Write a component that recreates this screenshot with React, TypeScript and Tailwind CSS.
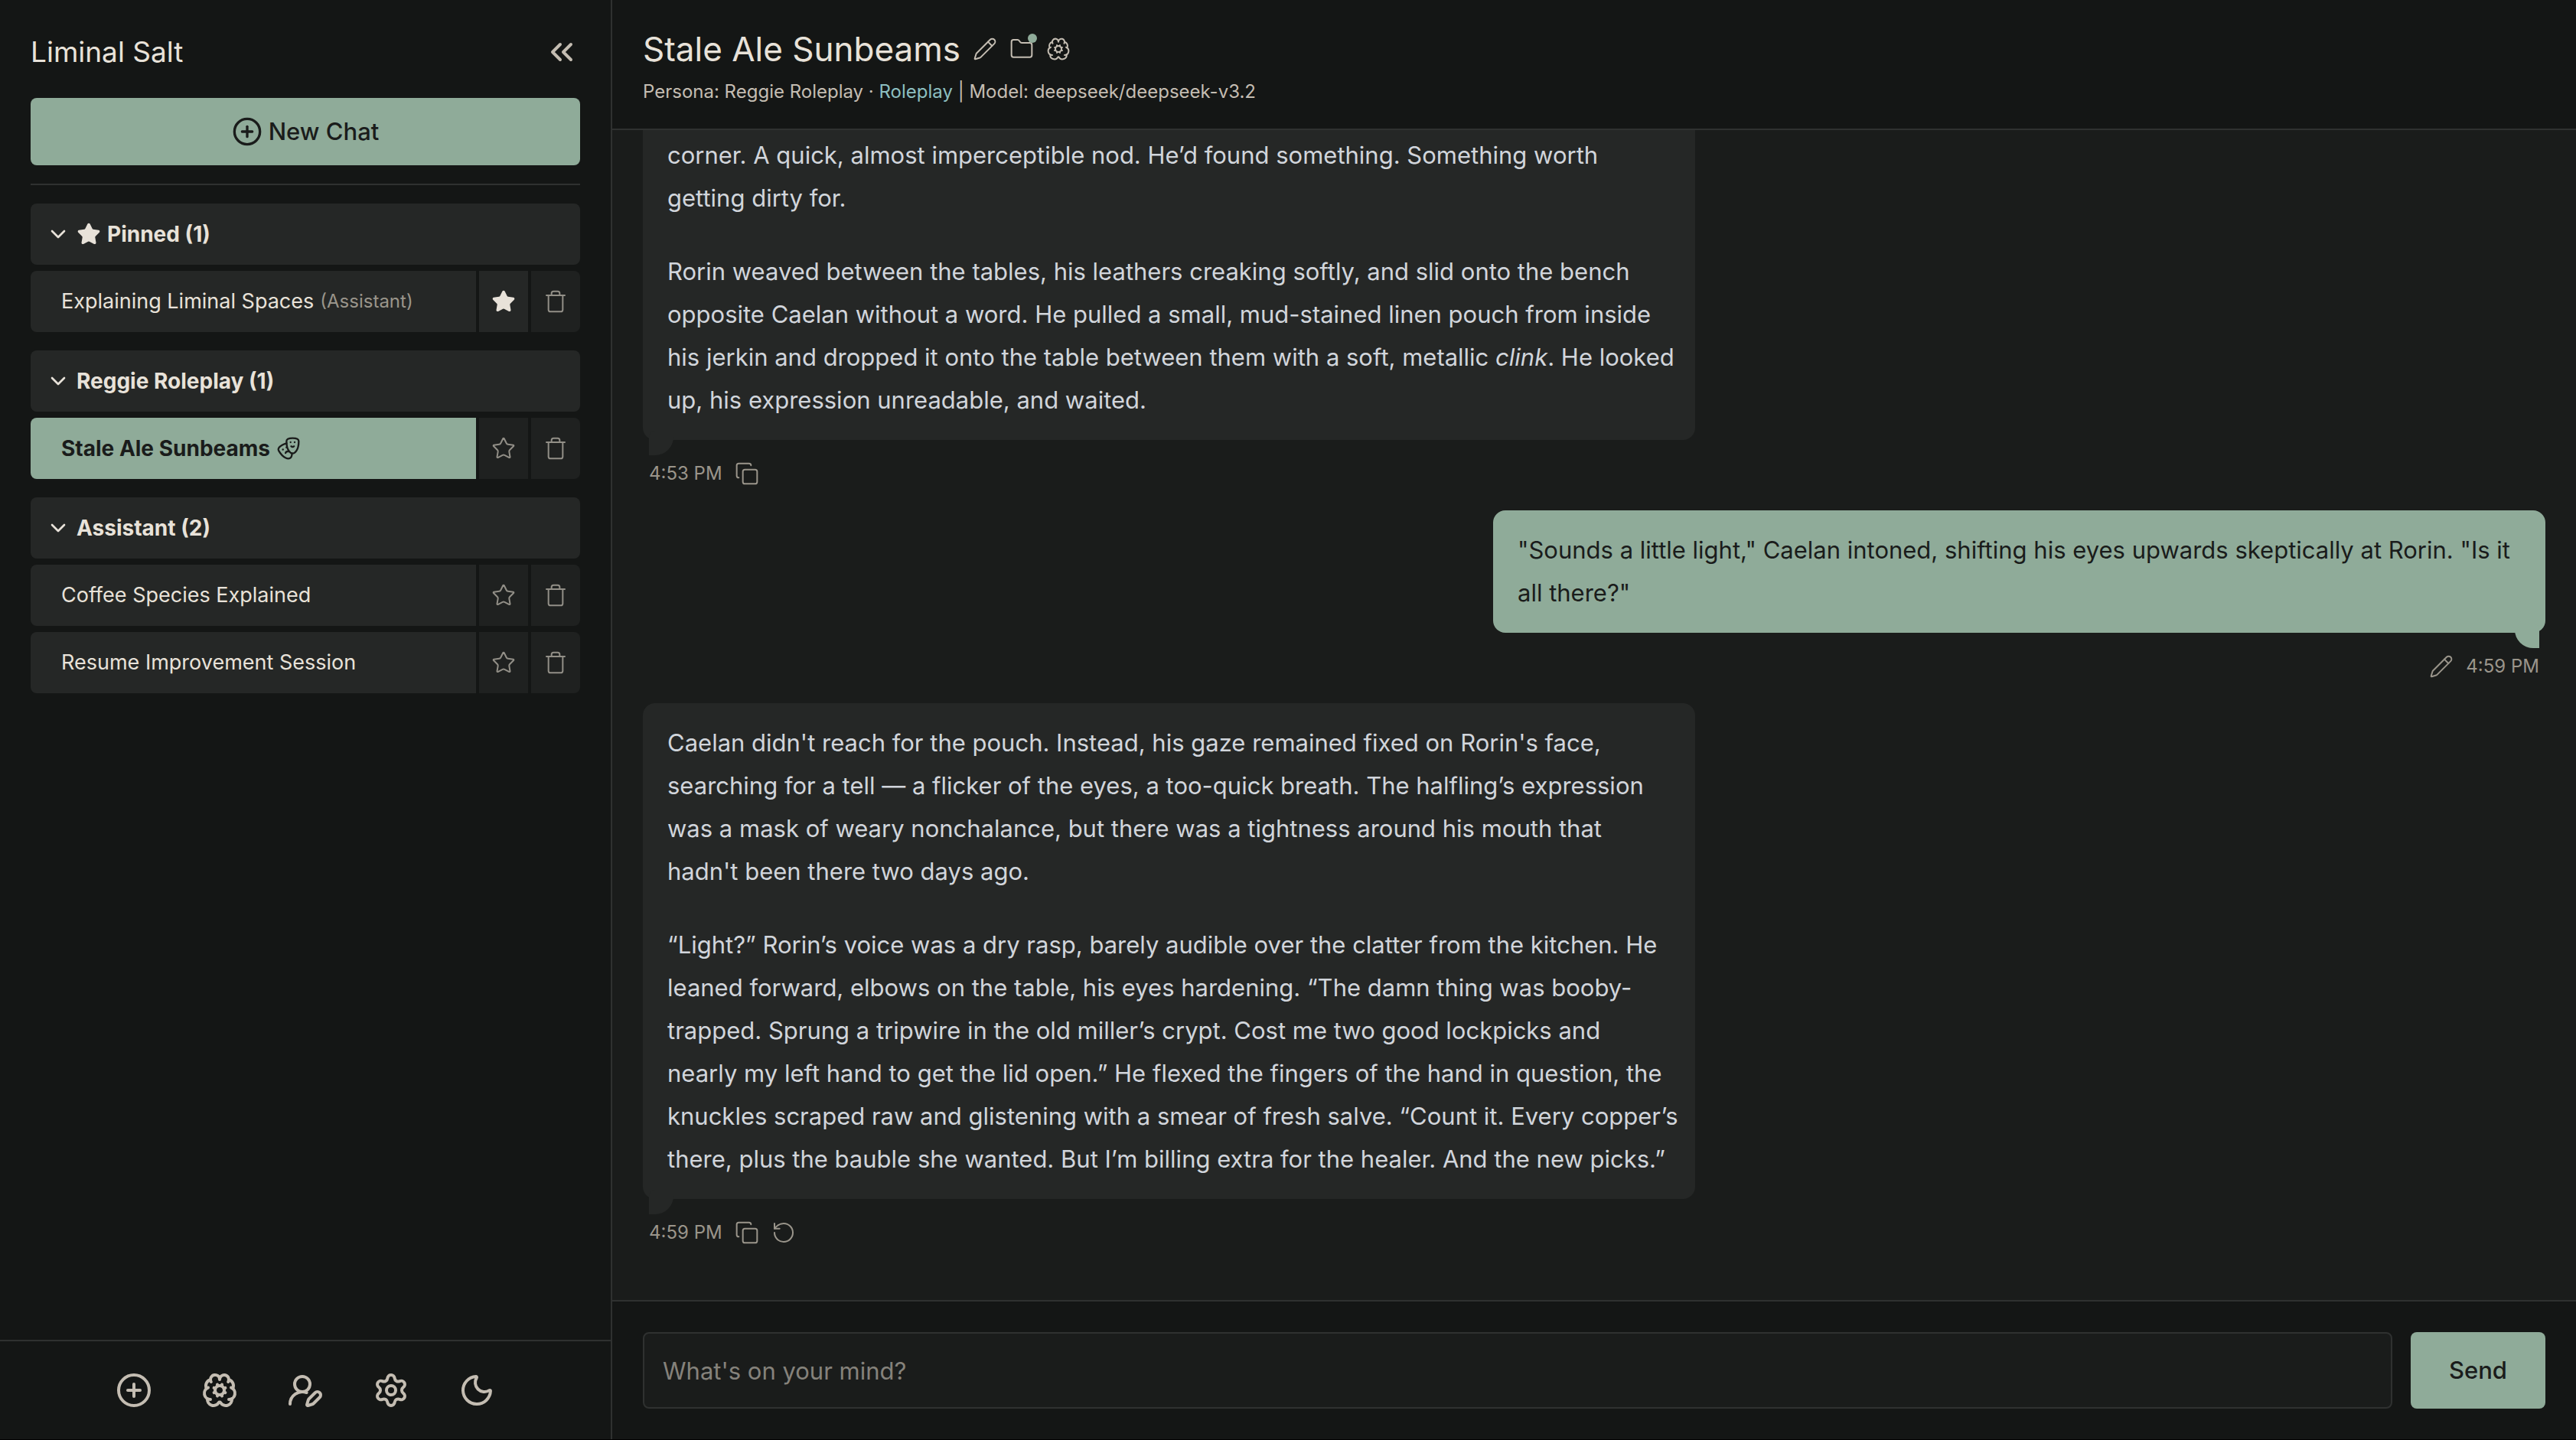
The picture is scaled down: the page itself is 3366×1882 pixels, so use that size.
import React, { useState } from 'react';
import {
  BrainCog,
  ChevronDown,
  ChevronsLeft,
  CirclePlus,
  Copy,
  Drama,
  Folder,
  Moon,
  Pencil,
  RotateCcw,
  Settings,
  Star,
  Trash,
  UserRoundPen,
} from 'lucide-react';

interface Chat {
  title: string;
  persona?: string;
  pinned?: boolean;
  roleplay?: boolean;
}

interface ChatGroup {
  name: string;
  pinned?: boolean;
  chats: Chat[];
}

const groups: ChatGroup[] = [
  { name: 'Pinned', pinned: true, chats: [{ title: 'Explaining Liminal Spaces', persona: 'Assistant', pinned: true }] },
  { name: 'Reggie Roleplay', chats: [{ title: 'Stale Ale Sunbeams', roleplay: true }] },
  { name: 'Assistant', chats: [{ title: 'Coffee Species Explained' }, { title: 'Resume Improvement Session' }] },
];

const footerActions = [
  { label: 'New chat', Icon: CirclePlus },
  { label: 'Memory', Icon: BrainCog },
  { label: 'Personas', Icon: UserRoundPen },
  { label: 'Settings', Icon: Settings },
  { label: 'Dark mode', Icon: Moon },
];

interface ChatRowProps {
  chat: Chat;
  active: boolean;
  onSelect: () => void;
}

const ChatRow: React.FC<ChatRowProps> = ({ chat, active, onSelect }) => (
  <li className="flex h-20 gap-1">
    <button
      onClick={onSelect}
      className={`flex min-w-0 flex-1 items-center gap-2 rounded-l-lg pl-10 text-left ${active ? 'bg-[#8fab99] text-[28px] font-bold text-[#1a1c1b]' : 'bg-[#252726] text-[27px] text-[#e8e2d9]'}`}
    >
      <span className="truncate">{chat.title}</span>
      {chat.persona && <span className="text-[24px] text-[#9a958b]">({chat.persona})</span>}
      {chat.roleplay && <Drama size={32} strokeWidth={1.75} />}
    </button>
    <button
      aria-label="Pin chat"
      className={`flex w-16 items-center justify-center ${chat.pinned ? 'bg-[#252726] text-[#e8e2d9]' : 'bg-[#1f2120] text-[#928f87]'}`}
    >
      <Star size={32} strokeWidth={1.5} fill={chat.pinned ? 'currentColor' : 'none'} />
    </button>
    <button aria-label="Delete chat" className="flex w-16 items-center justify-center rounded-r-lg bg-[#1f2120] text-[#928f87]">
      <Trash size={32} strokeWidth={1.5} />
    </button>
  </li>
);

const Sidebar: React.FC = () => {
  const [current, setCurrent] = useState('Stale Ale Sunbeams');

  return (
    <aside className="flex w-[800px] shrink-0 flex-col border-r-2 border-[#2f3130] bg-[#141615]">
      <div className="flex-1 px-10 pt-10">
        <div className="mb-8 flex h-14 items-center justify-between">
          <h1 className="text-[37px] text-[#e8e2d9]">Liminal Salt</h1>
          <button aria-label="Collapse sidebar" className="text-[#c4bdb2]">
            <ChevronsLeft size={48} />
          </button>
        </div>
        <button className="flex h-22 w-full items-center justify-center gap-2 rounded-lg bg-[#8fab99] text-[31px] font-medium text-[#1a1c1b]">
          <CirclePlus size={40} />
          New Chat
        </button>
        <hr className="my-6 border-t-2 border-[#2f3130]" />
        <nav className="flex flex-col gap-6">
          {groups.map((group) => (
            <section key={group.name}>
              <button className="flex h-20 w-full items-center gap-2 rounded-lg bg-[#252726] px-5 text-[28px] font-bold text-[#e8e2d9]">
                <ChevronDown size={32} />
                {group.pinned && <Star size={32} fill="currentColor" strokeWidth={1.5} />}
                {group.name} ({group.chats.length})
              </button>
              <ul className="mt-2 flex flex-col gap-2">
                {group.chats.map((chat) => (
                  <ChatRow key={chat.title} chat={chat} active={chat.title === current} onSelect={() => setCurrent(chat.title)} />
                ))}
              </ul>
            </section>
          ))}
        </nav>
      </div>
      <div className="flex h-[130px] items-center justify-center gap-16 border-t-2 border-[#2f3130] text-[#c4bdb2]">
        {footerActions.map(({ label, Icon }) => (
          <button key={label} aria-label={label}>
            <Icon size={48} />
          </button>
        ))}
      </div>
    </aside>
  );
};

interface MessageProps {
  time: string;
  fromUser?: boolean;
  canRetry?: boolean;
  children: React.ReactNode;
}

const Message: React.FC<MessageProps> = ({ time, fromUser, canRetry, children }) => (
  <article className={`flex shrink-0 flex-col ${fromUser ? 'items-end' : 'items-start'}`}>
    <div
      className={`relative flex w-[1375px] max-w-full flex-col gap-10 rounded-2xl py-6 pr-3 pl-8 text-[31px] leading-[56px] ${fromUser ? 'bg-[#8fab99] text-[#1a1c1b]' : 'bg-[#252726] text-[#d1d5db]'}`}
    >
      {children}
      <span
        className={`absolute -bottom-5 h-8 w-8 ${fromUser ? 'right-2 rounded-tr-lg rounded-bl-3xl bg-[#8fab99]' : 'left-2 rounded-tl-lg rounded-br-3xl bg-[#252726]'}`}
      />
    </div>
    <div className="mt-7 flex h-8 items-center gap-4 px-2 text-[24px] text-[#9a958b]">
      {fromUser && (
        <button aria-label="Edit message">
          <Pencil size={32} strokeWidth={1.5} />
        </button>
      )}
      <time>{time}</time>
      {!fromUser && (
        <button aria-label="Copy message">
          <Copy size={32} strokeWidth={1.5} />
        </button>
      )}
      {canRetry && (
        <button aria-label="Retry">
          <RotateCcw size={32} strokeWidth={1.5} />
        </button>
      )}
    </div>
  </article>
);

const ChatHeader: React.FC = () => (
  <header className="border-b-2 border-[#2f3130] bg-[#141615] px-10 py-8">
    <div className="flex h-16 items-center gap-4 text-[#c4bdb2]">
      <h2 className="text-[44px] text-[#e8e2d9]">Stale Ale Sunbeams</h2>
      <button aria-label="Rename chat">
        <Pencil size={32} strokeWidth={1.5} />
      </button>
      <button aria-label="Context files" className="relative">
        <Folder size={32} strokeWidth={1.5} />
        <span className="absolute -top-1 -right-1 h-3 w-3 rounded-full bg-[#8fab99]" />
      </button>
      <button aria-label="Chat memory">
        <BrainCog size={32} strokeWidth={1.5} />
      </button>
    </div>
    <p className="mt-2 text-[24px] leading-8 text-[#c4bdb2]">
      Persona: Reggie Roleplay · <span className="text-[#8cbfc0]">Roleplay</span> | Model: deepseek/deepseek-v3.2
    </p>
  </header>
);

const Composer: React.FC = () => {
  const [draft, setDraft] = useState('');

  return (
    <form
      onSubmit={(e) => e.preventDefault()}
      className="flex gap-6 border-t-2 border-[#2f3130] bg-[#141615] p-10 text-[31px]"
    >
      <input
        type="text"
        aria-label="Message"
        value={draft}
        onChange={(e) => setDraft(e.target.value)}
        placeholder="What's on your mind?"
        className="h-25 min-w-0 flex-1 rounded-lg border-2 border-[#2f3130] bg-[#1a1c1b] px-6 text-[#e8e2d9] placeholder:text-[#85827b]"
      />
      <button type="submit" className="w-44 rounded-lg bg-[#8fab99] font-medium text-[#1a1c1b]">
        Send
      </button>
    </form>
  );
};

const App: React.FC = () => (
  <div className="flex h-screen border-b border-black bg-[#1a1c1b] font-['Inter',sans-serif]">
    <Sidebar />
    <main className="flex min-w-0 flex-1 flex-col">
      <ChatHeader />
      <div className="flex min-h-0 flex-1 flex-col justify-end gap-8 overflow-hidden px-10 pb-18">
        <Message time="4:53 PM">
          <p>
            corner. A quick, almost imperceptible nod. He’d found something. Something worth
            <br />
            getting dirty for.
          </p>
          <p>
            Rorin weaved between the tables, his leathers creaking softly, and slid onto the bench opposite Caelan without
            a word. He pulled a small, mud-stained linen pouch from inside his jerkin and dropped it onto the table
            between them with a soft, metallic <em>clink</em>. He looked up, his expression unreadable, and waited.
          </p>
        </Message>
        <Message time="4:59 PM" fromUser>
          <p>"Sounds a little light," Caelan intoned, shifting his eyes upwards skeptically at Rorin. "Is it all there?"</p>
        </Message>
        <Message time="4:59 PM" canRetry>
          <p>
            Caelan didn't reach for the pouch. Instead, his gaze remained fixed on Rorin's face, searching for a tell — a
            flicker of the eyes, a too-quick breath. The halfling’s expression was a mask of weary nonchalance, but there
            was a tightness around his mouth that
            <br />
            hadn't been there two days ago.
          </p>
          <p>
            “Light?” Rorin’s voice was a dry rasp, barely audible over the clatter from the kitchen. He leaned forward,
            elbows on the table, his eyes hardening. “The damn thing was booby-trapped. Sprung a tripwire in the old
            miller’s crypt. Cost me two good lockpicks and
            <br />
            nearly my left hand to get the lid open.” He flexed the fingers of the hand in question, the knuckles scraped
            raw and glistening with a smear of fresh salve. “Count it. Every copper’s there, plus the bauble she wanted.
            But I’m billing extra for the healer. And the new picks.”
          </p>
        </Message>
      </div>
      <Composer />
    </main>
  </div>
);

export default App;
